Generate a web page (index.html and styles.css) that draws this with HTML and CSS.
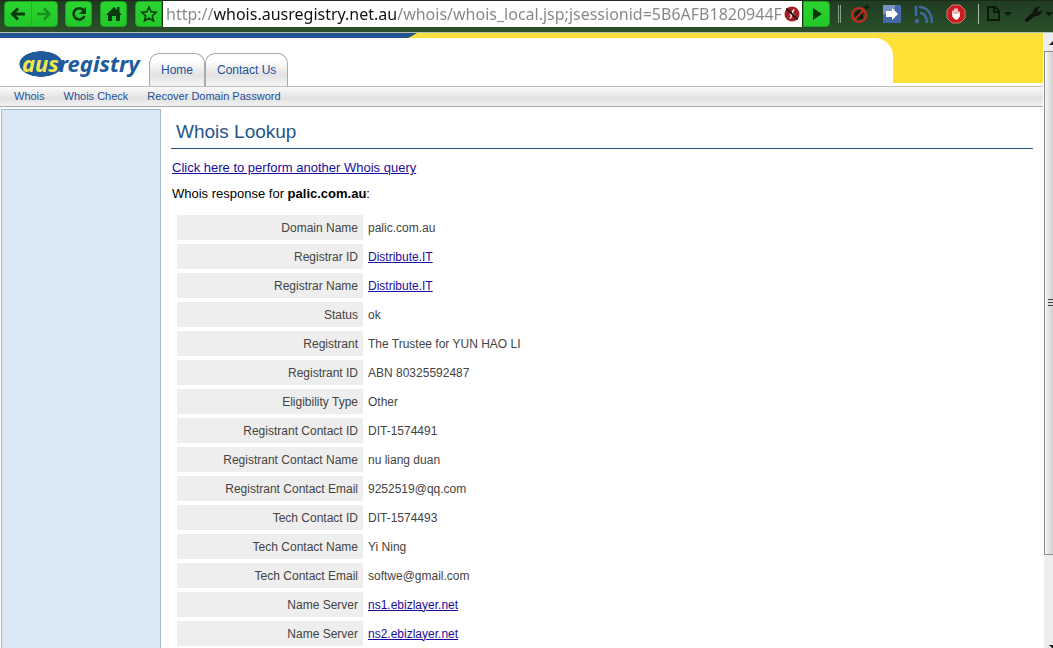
FILE: index.html
```html
<!DOCTYPE html>
<html lang="en">
<head>
<meta charset="utf-8">
<title>Whois Lookup</title>
<link rel="stylesheet" href="styles.css">
</head>
<body>
<div class="toolbar">
  <div class="group history">
    <button class="tool" aria-label="Back"><svg width="16" height="16" viewBox="0 0 16 16"><path d="M15 8H3M8 2.500 2.500 8 8 13.500" fill="none" stroke="#0b3a0d" stroke-width="3"/></svg></button>
    <button class="tool forward" aria-label="Forward"><svg width="16" height="16" viewBox="0 0 16 16"><path d="M1 8h12M8 2.500 13.500 8 8 13.500" fill="none" stroke="#16901b" stroke-width="2.500"/></svg></button>
  </div>
  <button class="tool group" aria-label="Reload"><svg width="16" height="16" viewBox="0 0 16 16"><path d="M12.500 4.200A5.600 5.600 0 1 0 13.400 10" fill="none" stroke="#0b3a0d" stroke-width="2.600"/><path d="M15 1v7H8z" fill="#0b3a0d"/></svg></button>
  <button class="tool group" aria-label="Home"><svg width="16" height="16" viewBox="0 0 16 16"><path d="M8 1 0 9h2v6h4v-5h4v5h4V9h2l-2.500-2.500V1H11v3z" fill="#0b3a0d"/></svg></button>
  <button class="tool group star" aria-label="Bookmark"><svg width="18" height="18" viewBox="0 0 18 18"><path d="m9 2 2.100 4.800 5.100.5-3.900 3.400 1.200 5.100L9 13.100l-4.500 2.700 1.200-5.100-3.900-3.400 5.100-.5z" fill="none" stroke="#0b3a0d" stroke-width="1.600"/></svg></button>
  <div class="address">
    <input class="url" type="text" aria-label="Address" value="http://whois.ausregistry.net.au/whois/whois_local.jsp;jsessionid=5B6AFB1820944F">
    <svg width="16" height="16" viewBox="0 0 17 17"><circle cx="8.500" cy="8.500" r="8" fill="#a31f22"/><path d="M11 4c-3 0-2 9-5 9M6 9h5" stroke="#fff" stroke-width="1.500" fill="none"/><path d="m2.500 2.500 12 12" stroke="#210b0b" stroke-width="2"/></svg>
  </div>
  <button class="tool group go" aria-label="Go"><svg width="12" height="12" viewBox="0 0 12 12"><path d="m2 0 9 6-9 6z" fill="#073609"/></svg></button>
  <div class="extensions">
    <span class="grip"></span>
    <button class="ext" aria-label="Block"><svg width="20" height="20" viewBox="0 0 20 20"><path d="M5 15V9l4-3 4 3v6z" fill="#101c10"/><circle cx="9" cy="11" r="7" fill="none" stroke="#c42b1b" stroke-width="2.200"/><path d="m4 16 10-10" stroke="#c42b1b" stroke-width="2"/><path d="M16.500 0v6M13.500 3h6" stroke="#101c10" stroke-width="1.600"/></svg></button>
    <button class="ext" aria-label="Send page"><svg width="18" height="18" viewBox="0 0 18 18"><path d="M0 0h18v18H0z" fill="#4768a8"/><path d="M0 0h12v9H0z" fill="#7892c4"/><path d="M3 6h6V3l6 6-6 6v-3H3z" fill="#fff"/></svg></button>
    <button class="ext" aria-label="Feed"><svg width="19" height="19" viewBox="0 0 19 19"><path d="M2 1v10M5 2c8 0 13 6 13 16M6 8c4 0 7 4 7 10" fill="none" stroke="#3e6a9c" stroke-width="2.600"/><circle cx="3" cy="16" r="2.200" fill="#3e6a9c"/></svg></button>
    <button class="ext" aria-label="Ad blocker"><svg width="20" height="20" viewBox="0 0 20 20"><path d="M6 1h8l5 5v8l-5 5H6l-5-5V6z" fill="#cc1b1d" stroke="#c9817b"/><path d="M7 10V7M9 9V5M11 9V5M13 11V8" stroke="#fff" stroke-width="1.400" stroke-linecap="round"/><path d="M6.300 9.500H13.700v3l-2 3H9l-2.700-3z" fill="#fff"/></svg></button>
    <span class="divider"></span>
    <button class="ext" aria-label="Page menu"><svg width="26" height="18" viewBox="0 0 26 18"><path d="M2 2h7l4 4v9H2zM8 2v5h5" fill="none" stroke="#0e160e" stroke-width="2"/><path d="M18 7h8l-4 4z" fill="#0e160e"/></svg></button>
    <button class="ext" aria-label="Tools menu"><svg width="28" height="18" viewBox="0 0 28 18"><path d="m2 15 7-6" stroke="#0e160e" stroke-width="4" stroke-linecap="round"/><path d="M8 9c-1-5 3-8 7-7l-3 3 2 2 3-2c0 4-4 7-8 6z" fill="#0e160e"/><path d="M20 7h8l-4 4z" fill="#0e160e"/></svg></button>
  </div>
</div>
<div class="viewport">
  <div class="page">
    <div class="stripe"><span class="blue"></span></div>
    <header class="banner">
      <div class="banner-card">
        <a class="logo" href="#" aria-label="ausregistry"><span class="aus">aus</span><span class="registry">registry</span></a>
        <nav class="tabs"><a href="#">Home</a><a href="#">Contact Us</a></nav>
      </div>
    </header>
    <nav class="subnav"><a href="#">Whois</a><a href="#">Whois Check</a><a href="#">Recover Domain Password</a></nav>
    <div class="columns">
      <aside class="side"></aside>
      <main class="main">
        <h1>Whois Lookup</h1>
        <p><a href="#">Click here to perform another Whois query</a></p>
        <p class="response">Whois response for <b>palic.com.au</b>:</p>
        <table class="record">
          <tr><th scope="row">Domain Name</th><td>palic.com.au</td></tr>
          <tr><th scope="row">Registrar ID</th><td><a href="#">Distribute.IT</a></td></tr>
          <tr><th scope="row">Registrar Name</th><td><a href="#">Distribute.IT</a></td></tr>
          <tr><th scope="row">Status</th><td>ok</td></tr>
          <tr><th scope="row">Registrant</th><td>The Trustee for YUN HAO LI</td></tr>
          <tr><th scope="row">Registrant ID</th><td>ABN 80325592487</td></tr>
          <tr><th scope="row">Eligibility Type</th><td>Other</td></tr>
          <tr><th scope="row">Registrant Contact ID</th><td>DIT-1574491</td></tr>
          <tr><th scope="row">Registrant Contact Name</th><td>nu liang duan</td></tr>
          <tr><th scope="row">Registrant Contact Email</th><td>9252519@qq.com</td></tr>
          <tr><th scope="row">Tech Contact ID</th><td>DIT-1574493</td></tr>
          <tr><th scope="row">Tech Contact Name</th><td>Yi Ning</td></tr>
          <tr><th scope="row">Tech Contact Email</th><td>softwe@gmail.com</td></tr>
          <tr><th scope="row">Name Server</th><td><a href="#">ns1.ebizlayer.net</a></td></tr>
          <tr><th scope="row">Name Server</th><td><a href="#">ns2.ebizlayer.net</a></td></tr>
        </table>
      </main>
    </div>
  </div>
  <div class="scrollbar">
    <span class="arrow"><svg width="12" height="6" viewBox="0 0 12 6"><path d="m6 0 6 6H0z" fill="#222"/></svg></span>
    <span class="thumb"><span class="notches"></span></span>
    <span class="arrow down"><svg width="12" height="6" viewBox="0 0 12 6"><path d="M0 0h12L6 6z" fill="#222"/></svg></span>
  </div>
</div>
</body>
</html>
```
FILE: styles.css
```css
* { box-sizing: border-box; }
body {
  margin: 0;
  height: 100vh;
  display: flex;
  flex-direction: column;
  overflow: hidden;
  background: #fff;
  font-family: "Liberation Sans", Arial, sans-serif;
  font-size: 13px;
  line-height: 16px;
}
button { border: 0; padding: 0; background: none; display: flex; align-items: center; justify-content: center; }
svg { display: block; flex: none; }

.toolbar {
  flex: none;
  display: flex;
  height: 33px;
  padding: 0 0 5px 4px;
  background: linear-gradient(#203c22, #2b5029);
  border-top: 1px solid #1b2a1b;
  border-bottom: 1px solid #b5c4ae;
}
.group { background: linear-gradient(#2bd431, #22c829); border: 1px solid #1aa51f; border-radius: 4px; }
.history { display: flex; width: 54px; margin-right: 7px; }
.history .tool { flex: 1; }
.forward { border-left: 1px solid #1fb325; }
.tool { width: 27px; }
.tool.group { margin-right: 8px; }
.tool.star { margin-right: 0; border-radius: 4px 0 0 4px; }
.tool.go { margin-right: 7px; border-radius: 0 4px 4px 0; }
.address {
  flex: 1;
  min-width: 0;
  display: flex;
  align-items: center;
  padding: 0 2px 0 3px;
  background: #fff;
  border-left: 1px solid #143016;
  border-right: 1px solid #143016;
}
.url {
  flex: 1;
  min-width: 0;
  border: 0;
  padding: 0;
  outline: 0;
  font: 16px/24px "Noto Sans", sans-serif;
  color: transparent;
  background: linear-gradient(90deg, #858585 48px, #111 48px 231px, #858585 231px);
  background-clip: text;
  -webkit-background-clip: text;
}
.extensions { display: flex; align-items: center; gap: 13px; width: 216px; padding-left: 1px; flex: none; }
.grip { width: 4px; height: 18px; margin-right: -4px; border-left: 1px solid #8ba08a; border-right: 1px solid #8ba08a; }
.divider { width: 1px; height: 20px; margin: 0 -6px 0 -1px; background: #a9b8a8; }

.viewport { flex: 1; min-height: 0; display: flex; }
.page { flex: 1; min-width: 0; display: flex; flex-direction: column; overflow: hidden; }
.stripe { flex: none; height: 5px; background: #fbdf3c; }
.blue { display: block; width: 40%; height: 5px; background: #20538f; clip-path: polygon(0 0, 100% 0, calc(100% - 9px) 100%, 0 100%); }
.banner { flex: none; padding-right: 150px; background: linear-gradient(#ffe034 45px, #fff 45px); border-bottom: 1px solid #bdbdbd; }
.banner-card { display: flex; height: 48px; padding-left: 19px; background: #fff; border-top-right-radius: 18px; }
.logo {
  display: flex;
  width: 130px;
  height: 26px;
  margin-top: 13px;
  font: italic bold 22px/24px "Noto Sans", sans-serif;
  text-decoration: none;
  background: radial-gradient(ellipse 22px 13px at 22px 13px, #205a9c 96%, transparent 100%);
}
.aus { padding-left: 3px; color: #efe84a; }
.registry { color: #205a9c; }
.tabs { display: flex; align-items: flex-end; }
.tabs a {
  height: 33px;
  padding: 8px 11px;
  border: 1px solid #aaa;
  border-bottom: 0;
  border-radius: 10px 10px 0 0;
  background: linear-gradient(#fff 20%, #e3e3e3 65%, #f4f4f4);
  color: #24529a;
  font-size: 12px;
  text-decoration: none;
}
.subnav {
  flex: none;
  display: flex;
  gap: 19px;
  height: 20px;
  padding: 1px 14px;
  background: linear-gradient(#fafafa, #e2e2e2 60%, #f2f2f2);
  border-bottom: 1px solid #a9a9a9;
}
.subnav a { color: #24529a; font-size: 11px; text-decoration: none; }

.columns { flex: 1; min-height: 0; display: flex; padding: 2px 0 0 1px; }
.side { flex: none; width: 160px; background: #dae7f5; border: 1px solid #a3bccb; border-bottom: 0; }
.main { flex: 1; min-width: 0; padding: 11px 10px 0; }
h1 { margin: 0 0 11px; padding: 0 5px 4px; border-bottom: 1px solid #205080; color: #24568c; font-size: 19px; font-weight: normal; line-height: 24px; }
p { margin: 0 1px 10px; }
.response { margin-bottom: 9px; }
.main a { color: #1a0d9c; }
.record { margin: 0 0 0 2px; border-spacing: 4px; font-size: 12px; color: #444; }
.record th, .record td { height: 25px; padding: 0 5px; font-weight: normal; }
.record th { width: 186px; background: #eee; text-align: right; }
.record td { padding-left: 1px; }

.scrollbar { flex: none; display: flex; flex-direction: column; width: 9px; margin-left: 1px; overflow: hidden; background: #ededed; }
.arrow { flex: none; display: flex; height: 18px; padding: 6px 0 0 5px; }
.arrow.down { height: 9px; margin-top: auto; }
.thumb { flex: none; display: flex; align-items: center; height: 82%; border: 1px solid #8b8b8b; border-right: 0; background: linear-gradient(90deg, #f7f7f7, #d0d0d0); }
.notches { width: 100%; height: 8px; margin-left: 3px; background: repeating-linear-gradient(#444 0 1px, #ddd 1px 3px); }
```
